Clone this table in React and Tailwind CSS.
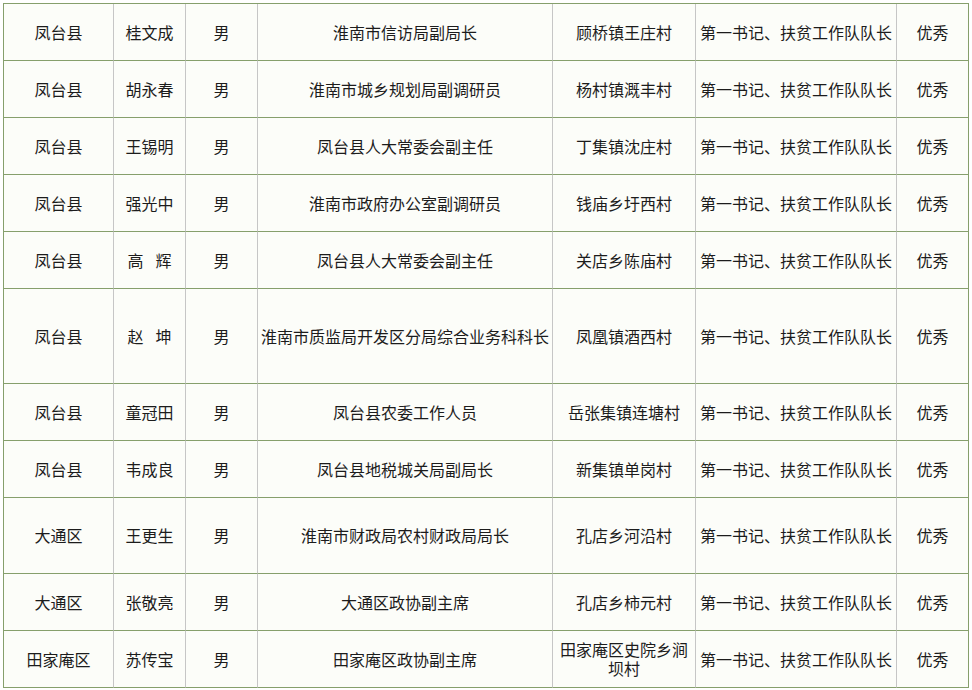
import React from "react";

const rows = [
  { area: "凤台县", name: "桂文成", post: "淮南市信访局副局长", village: "顾桥镇王庄村" },
  { area: "凤台县", name: "胡永春", post: "淮南市城乡规划局副调研员", village: "杨村镇溉丰村" },
  { area: "凤台县", name: "王锡明", post: "凤台县人大常委会副主任", village: "丁集镇沈庄村" },
  { area: "凤台县", name: "强光中", post: "淮南市政府办公室副调研员", village: "钱庙乡圩西村" },
  { area: "凤台县", name: ["高", "辉"], post: "凤台县人大常委会副主任", village: "关店乡陈庙村" },
  { area: "凤台县", name: ["赵", "坤"], post: "淮南市质监局开发区分局综合业务科科长", village: "凤凰镇酒西村", tall: "h-[95px]" },
  { area: "凤台县", name: "童冠田", post: "凤台县农委工作人员", village: "岳张集镇连塘村" },
  { area: "凤台县", name: "韦成良", post: "凤台县地税城关局副局长", village: "新集镇单岗村" },
  { area: "大通区", name: "王更生", post: "淮南市财政局农村财政局局长", village: "孔店乡河沿村", tall: "h-[76px]" },
  { area: "大通区", name: "张敬亮", post: "大通区政协副主席", village: "孔店乡柿元村" },
  { area: "田家庵区", name: "苏传宝", post: "田家庵区政协副主席", village: "田家庵区史院乡涧坝村" },
];

function Name({ value }) {
  if (Array.isArray(value)) {
    return (
      <>
        {value[0]}
        <span className="inline-block w-3" />
        {value[1]}
      </>
    );
  }
  return value;
}

export default function App() {
  const cell = "border-b border-r border-b-[#869f6c] border-r-[#c6c6c6] text-center align-middle px-[3px] leading-[19px]";

  return (
    <div
      className="bg-white pl-[3px] pt-[3px] w-[972px] h-[690px] overflow-hidden"
      style={{ fontFamily: '"SimSun", "Noto Sans CJK SC", sans-serif' }}
    >
      <table className="table-fixed border-separate border-spacing-0 w-[965px] bg-[#fcfdf9] text-[16px] text-[#1c1c1c] border-t border-l border-[#869f6c]">
        <colgroup>
          <col className="w-[110px]" />
          <col className="w-[72px]" />
          <col className="w-[72px]" />
          <col className="w-[295px]" />
          <col className="w-[143px]" />
          <col className="w-[201px]" />
          <col className="w-[72px]" />
        </colgroup>
        <tbody>
          {rows.map((r, i) => (
            <tr key={i} className={r.tall || "h-[57px]"}>
              <td className={cell}>{r.area}</td>
              <td className={cell}>
                <Name value={r.name} />
              </td>
              <td className={cell}>男</td>
              <td className={cell}>{r.post}</td>
              <td className={cell}>{r.village}</td>
              <td className={cell}>第一书记、扶贫工作队队长</td>
              <td className={cell + " !border-r-[#869f6c]"}>优秀</td>
            </tr>
          ))}
        </tbody>
      </table>
    </div>
  );
}
